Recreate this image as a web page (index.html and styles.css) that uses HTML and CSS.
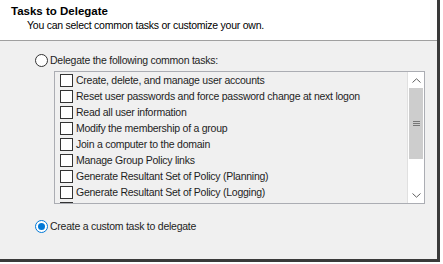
FILE: index.html
```html
<!DOCTYPE html>
<html>
<head>
<meta charset="utf-8">
<link rel="stylesheet" href="styles.css">
</head>
<body>
<div class="window">
  <div class="header">
    <div class="title">Tasks to Delegate</div>
    <div class="subtitle">You can select common tasks or customize your own.</div>
  </div>
  <div class="content">
    <label class="radio-row"><span class="radio"></span><span>Delegate the following common tasks:</span></label>
    <div class="listbox">
      <div class="items">
        <div class="item"><span class="check"></span>Create, delete, and manage user accounts</div>
        <div class="item"><span class="check"></span>Reset user passwords and force password change at next logon</div>
        <div class="item"><span class="check"></span>Read all user information</div>
        <div class="item"><span class="check"></span>Modify the membership of a group</div>
        <div class="item"><span class="check"></span>Join a computer to the domain</div>
        <div class="item"><span class="check"></span>Manage Group Policy links</div>
        <div class="item"><span class="check"></span>Generate Resultant Set of Policy (Planning)</div>
        <div class="item"><span class="check"></span>Generate Resultant Set of Policy (Logging)</div>
        <div class="item"><span class="check"></span>Create, delete, and manage inetOrgPerson accounts</div>
      </div>
      <div class="scrollbar">
        <div class="sb-btn"><svg width="9" height="5" viewBox="0 0 9 5"><path d="M0.5 4.5 L4.5 0.8 L8.5 4.5" fill="none" stroke="#606060" stroke-width="1"/></svg></div>
        <div class="sb-track">
          <div class="sb-thumb"><span class="grip"></span></div>
        </div>
        <div class="sb-btn"><svg width="9" height="5" viewBox="0 0 9 5"><path d="M0.5 0.5 L4.5 4.2 L8.5 0.5" fill="none" stroke="#606060" stroke-width="1"/></svg></div>
      </div>
    </div>
    <label class="radio-row second"><span class="radio checked"></span><span>Create a custom task to delegate</span></label>
  </div>
</div>
</body>
</html>
```

FILE: styles.css
```css
html, body {
  margin: 0;
  padding: 0;
  background: #ffffff;
}
body {
  font-family: "Liberation Sans", Arial, sans-serif;
  font-size: 10.5px;
  letter-spacing: -0.25px;
  color: #1e1e1e;
}
.window {
  width: 437px;
  height: 259px;
  background: #f0f0f0;
  border-right: 3px solid #3a3a3a;
  border-bottom: 3px solid #3a3a3a;
  display: flex;
  flex-direction: column;
  overflow: hidden;
}
.header {
  background: #ffffff;
  height: 35px;
  border-bottom: 1px solid #a0a0a0;
  padding: 5px 0 0 11px;
}
.title {
  font-weight: bold;
  font-size: 11.5px;
  letter-spacing: 0;
  line-height: 13px;
  color: #000;
}
.subtitle {
  padding-left: 16px;
  padding-top: 1px;
  line-height: 13px;
  color: #000;
}
.content {
  padding: 12px 0 0 35px;
  display: flex;
  flex-direction: column;
}
.radio-row {
  display: flex;
  align-items: center;
  gap: 2px;
  height: 14px;
  line-height: 14px;
}
.radio {
  width: 11px;
  height: 11px;
  border: 1px solid #333;
  border-radius: 50%;
  background: #fff;
  position: relative;
  flex: none;
}
.radio.checked {
  border-color: #0078d7;
}
.radio.checked::after {
  content: "";
  position: absolute;
  left: 2px;
  top: 2px;
  width: 7px;
  height: 7px;
  border-radius: 50%;
  background: #0078d7;
}
.listbox {
  margin: 4px 0 0 19px;
  width: 369px;
  height: 131px;
  border: 1px solid #abadb3;
  background: #f0f0f0;
  display: flex;
  overflow: hidden;
}
.items {
  flex: 1;
  padding-left: 5px;
  overflow: hidden;
}
.item {
  height: 16px;
  display: flex;
  align-items: center;
  white-space: nowrap;
  gap: 3px;
}
.check {
  width: 11px;
  height: 11px;
  border: 1px solid #333;
  background: #fff;
  flex: none;
}
.scrollbar {
  width: 16px;
  border-left: 1px solid #e0e0e0;
  display: flex;
  flex-direction: column;
  background: #fff;
}
.sb-btn {
  height: 16px;
  display: flex;
  align-items: center;
  justify-content: center;
  background: #fff;
}
.sb-track {
  flex: 1;
  background: #fff;
}
.sb-thumb {
  height: 71px;
  background: #cdcdcd;
  margin: 0 1px;
  display: flex;
  align-items: center;
  justify-content: center;
}
.grip {
  width: 7px;
  height: 5px;
  border-top: 1px solid #777;
  border-bottom: 1px solid #777;
  position: relative;
  box-sizing: border-box;
}
.grip::after {
  content: "";
  position: absolute;
  left: 0;
  right: 0;
  top: 1px;
  border-top: 1px solid #777;
}
.second {
  margin-top: 15px;
}
```
